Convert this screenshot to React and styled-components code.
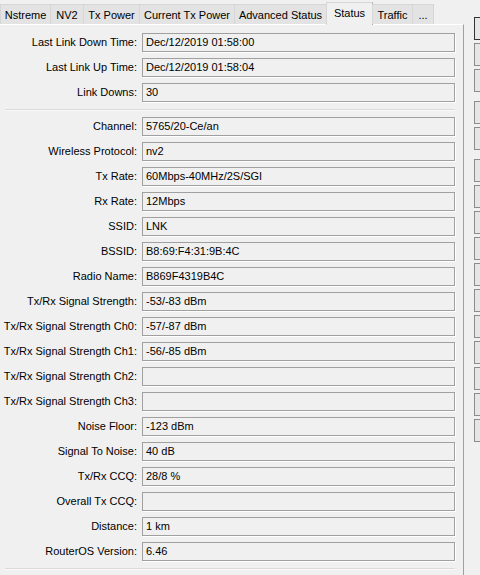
import React from "react";
import styled, { createGlobalStyle } from "styled-components";

const Global = createGlobalStyle`
  html, body { margin: 0; padding: 0; background: #f0f0f0; overflow: hidden; }
  body { font-family: "Liberation Sans", Arial, sans-serif; font-size: 11px; color: #000; }
`;

const Window = styled.div`
  width: 480px;
  height: 575px;
  overflow: hidden;
  display: flex;
  align-items: flex-start;
  background: #f0f0f0;
`;

const LeftColumn = styled.div`
  width: 464px;
  flex: none;
  display: flex;
  flex-direction: column;
`;

const TabBar = styled.div`
  display: flex;
  align-items: flex-end;
  height: 24px;
  position: relative;
  z-index: 1;
`;

const Tab = styled.div`
  box-sizing: border-box;
  width: ${(p) => p.$w}px;
  height: ${(p) => (p.$active ? 23 : 20)}px;
  margin-bottom: ${(p) => (p.$active ? -1 : 0)}px;
  display: flex;
  align-items: center;
  justify-content: center;
  background: ${(p) => (p.$active ? "#f0f0f0" : "#e3e3e3")};
  border: 1px solid #d6d6d6;
  border-right-color: ${(p) => (p.$active ? "#a9a9a9" : "#d6d6d6")};
  border-bottom: none;
  margin-right: -1px;
  padding-bottom: ${(p) => (p.$active ? 2 : 0)}px;
  white-space: nowrap;
  font-size: 11px;
`;

const Panel = styled.div`
  border-top: 1px solid #ffffff;
  border-right: 1px solid #a0a0a0;
  height: 560px;
  box-sizing: border-box;
  padding-top: 8px;
`;

const Group = styled.div`
  display: grid;
  grid-template-columns: 137px 313px;
  column-gap: 5px;
  row-gap: 6px;
`;

const Label = styled.div`
  height: 19px;
  line-height: 19px;
  text-align: right;
  white-space: nowrap;
`;

const Field = styled.div`
  box-sizing: border-box;
  height: 19px;
  line-height: 17px;
  padding-left: 3px;
  border: 1px solid #a0a0a0;
  box-shadow: 1px 1px 0 #ffffff;
  background: #f0f0f0;
  white-space: nowrap;
  overflow: hidden;
`;

const Separator = styled.div`
  margin: 7px 0 6px 5px;
  width: 450px;
  height: 0;
  border-top: 1px solid #dadada;
  border-bottom: 1px solid #fafafa;
`;

const ButtonColumn = styled.div`
  margin-left: 10px;
  padding-top: 17px;
  display: flex;
  flex-direction: column;
  gap: 3px;
  flex: none;
`;

const Button = styled.button`
  box-sizing: border-box;
  width: 86px;
  height: 23px;
  margin: ${(p) => (p.$gapBefore ? 6 : 0)}px 0 0 0;
  padding: 0;
  border: 1px solid ${(p) => (p.$default ? "#333333" : "#8c8c8c")};
  background: #e6e6e6;
  font: inherit;
`;

const tabs = [
  { t: "Nstreme", w: 51 },
  { t: "NV2", w: 34 },
  { t: "Tx Power", w: 57 },
  { t: "Current Tx Power", w: 96 },
  { t: "Advanced Status", w: 93 },
  { t: "Status", w: 47, active: true },
  { t: "Traffic", w: 41 },
  { t: "...", w: 22 },
];

const group1 = [
  ["Last Link Down Time:", "Dec/12/2019 01:58:00"],
  ["Last Link Up Time:", "Dec/12/2019 01:58:04"],
  ["Link Downs:", "30"],
];

const group2 = [
  ["Channel:", "5765/20-Ce/an"],
  ["Wireless Protocol:", "nv2"],
  ["Tx Rate:", "60Mbps-40MHz/2S/SGI"],
  ["Rx Rate:", "12Mbps"],
  ["SSID:", "LNK"],
  ["BSSID:", "B8:69:F4:31:9B:4C"],
  ["Radio Name:", "B869F4319B4C"],
  ["Tx/Rx Signal Strength:", "-53/-83 dBm"],
  ["Tx/Rx Signal Strength Ch0:", "-57/-87 dBm"],
  ["Tx/Rx Signal Strength Ch1:", "-56/-85 dBm"],
  ["Tx/Rx Signal Strength Ch2:", ""],
  ["Tx/Rx Signal Strength Ch3:", ""],
  ["Noise Floor:", "-123 dBm"],
  ["Signal To Noise:", "40 dB"],
  ["Tx/Rx CCQ:", "28/8 %"],
  ["Overall Tx CCQ:", ""],
  ["Distance:", "1 km"],
  ["RouterOS Version:", "6.46"],
];

// Window buttons: only their left edges are visible in the frame, so they carry accessible names only.
const buttons = [
  { t: "OK", def: true },
  { t: "Cancel" },
  { t: "Apply" },
  { t: "Disable", gap: true },
  { t: "Comment" },
  { t: "Advanced Mode", gap: true },
  { t: "Torch" },
  { t: "WPS Accept" },
  { t: "WPS Client" },
  { t: "Setup Repeater" },
  { t: "Scan..." },
  { t: "Freq. Usage..." },
  { t: "Align..." },
  { t: "Sniff..." },
  { t: "Snooper..." },
  { t: "Reset Configuration" },
];

function Rows({ rows }) {
  return (
    <Group>
      {rows.map(([l, v]) => (
        <React.Fragment key={l}>
          <Label>{l}</Label>
          <Field>{v}</Field>
        </React.Fragment>
      ))}
    </Group>
  );
}

export default function App() {
  return (
    <>
      <Global />
      <Window>
        <LeftColumn>
          <TabBar>
            {tabs.map((t) => (
              <Tab key={t.t} $w={t.w} $active={t.active}>
                {t.t}
              </Tab>
            ))}
          </TabBar>
          <Panel>
            <Rows rows={group1} />
            <Separator />
            <Rows rows={group2} />
            <Separator />
          </Panel>
        </LeftColumn>
        <ButtonColumn>
          {buttons.map((b) => (
            <Button
              key={b.t}
              type="button"
              aria-label={b.t}
              $default={b.def}
              $gapBefore={b.gap}
            />
          ))}
        </ButtonColumn>
      </Window>
    </>
  );
}
